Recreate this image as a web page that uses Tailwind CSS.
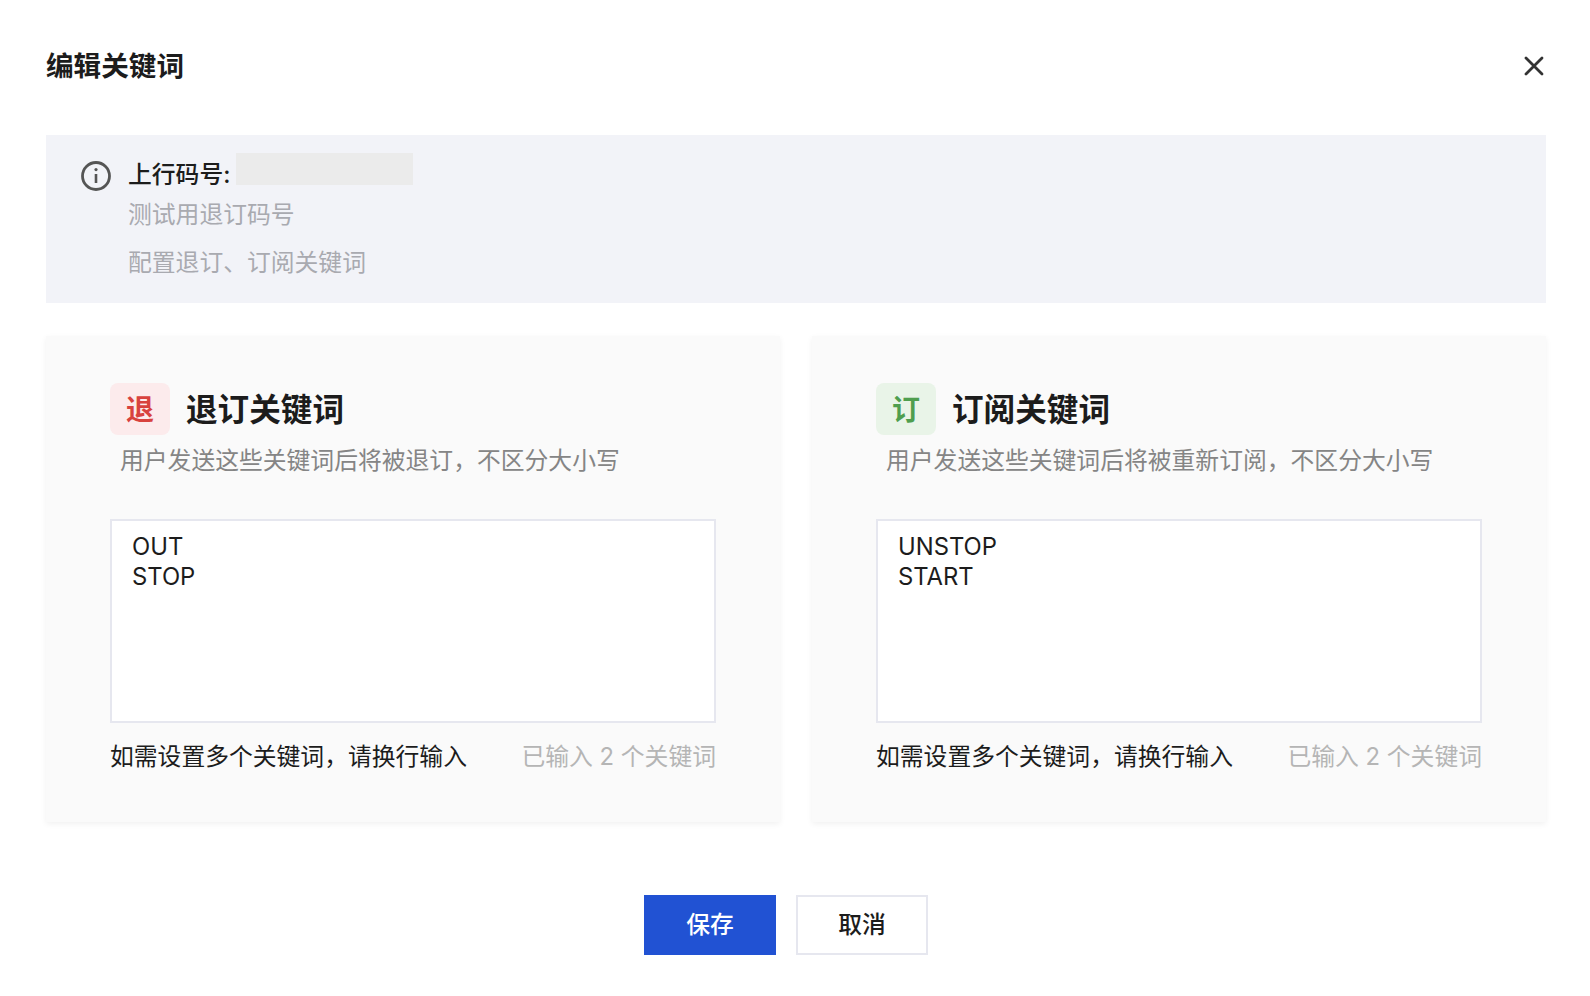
<!DOCTYPE html>
<html lang="zh-CN">
<head>
<meta charset="utf-8">
<title>编辑关键词</title>
<script src="https://cdn.jsdelivr.net/npm/@tailwindcss/browser@4"></script>
</head>
<body class="bg-white font-['Inter','Noto_Sans_CJK_SC',sans-serif] text-[#1c1c1c]">
<div class="w-[1590px] h-[996px] overflow-hidden pl-[46px] pr-[44px] pt-[46px]">
  <header class="flex items-center justify-between h-[38px] pr-[1px] pt-[1px]">
    <h1 class="text-[27.6px] leading-[38px] font-bold">编辑关键词</h1>
    <svg class="w-[22px] h-[22px] mt-[1px]" viewBox="0 0 22 22" fill="none" stroke="#333" stroke-width="2.8" stroke-linecap="round"><path d="M3 3L19 19M19 3L3 19"/></svg>
  </header>

  <section class="mt-[51px] h-[168px] bg-[#f2f3f8] flex pl-[35px] pt-[18px]">
    <svg class="w-[30px] h-[30px] mt-[8px] shrink-0" viewBox="0 0 30 30" fill="none" stroke="#555"><circle cx="15" cy="15" r="13.5" stroke-width="2.8"/><path d="M15 13V22" stroke-width="2.6"/><circle cx="15" cy="8.6" r="1.6" fill="#555" stroke="none"/></svg>
    <div class="ml-[17px] text-[23.8px]">
      <div class="flex items-start h-[44px]">
        <span class="leading-[44px] font-medium">上行码号:</span>
        <span class="ml-[6px] w-[177px] h-[32px] bg-[#ebebeb]"></span>
      </div>
      <p class="leading-[36px] text-[#a9aab0]">测试用退订码号</p>
      <p class="mt-[12px] leading-[36px] text-[#a9aab0]">配置退订、订阅关键词</p>
    </div>
  </section>

  <div class="mt-[33px] flex gap-[32px]">
    <section class="w-[734px] h-[486px] bg-[#fafafa] shadow-[0_2px_6px_rgba(0,0,0,0.06)] px-[64px] pt-[47px]">
      <div class="flex items-center gap-[16px]">
        <span class="w-[60px] h-[52px] rounded-[8px] bg-[#fcebec] text-[#d8423e] text-[28px] font-semibold flex items-center justify-center pt-[1px]">退</span>
        <h2 class="text-[31.6px] leading-[54px] h-[52px] font-bold">退订关键词</h2>
      </div>
      <p class="mt-[9px] pl-[10px] text-[23.8px] leading-[34px] h-[36px] text-[#858585]">用户发送这些关键词后将被退订，不区分大小写</p>
      <textarea readonly class="block mt-[39px] w-[606px] h-[204px] resize-none bg-white border-2 border-[#e6e7ef] px-[20px] pt-[11px] text-[23.8px] leading-[30px] outline-none">OUT
STOP</textarea>
      <div class="mt-[16px] flex justify-between text-[23.8px] leading-[36px]">
        <span>如需设置多个关键词，请换行输入</span>
        <span class="text-[#b5b5b5]">已输入 2 个关键词</span>
      </div>
    </section>
    <section class="w-[734px] h-[486px] bg-[#fafafa] shadow-[0_2px_6px_rgba(0,0,0,0.06)] px-[64px] pt-[47px]">
      <div class="flex items-center gap-[16px]">
        <span class="w-[60px] h-[52px] rounded-[8px] bg-[#e9f4e8] text-[#4f9e4f] text-[28px] font-semibold flex items-center justify-center pt-[1px]">订</span>
        <h2 class="text-[31.6px] leading-[54px] h-[52px] font-bold">订阅关键词</h2>
      </div>
      <p class="mt-[9px] pl-[10px] text-[23.8px] leading-[34px] h-[36px] text-[#858585]">用户发送这些关键词后将被重新订阅，不区分大小写</p>
      <textarea readonly class="block mt-[39px] w-[606px] h-[204px] resize-none bg-white border-2 border-[#e6e7ef] px-[20px] pt-[11px] text-[23.8px] leading-[30px] outline-none">UNSTOP
START</textarea>
      <div class="mt-[16px] flex justify-between text-[23.8px] leading-[36px]">
        <span>如需设置多个关键词，请换行输入</span>
        <span class="text-[#b5b5b5]">已输入 2 个关键词</span>
      </div>
    </section>
  </div>

  <div class="mt-[73px] flex gap-[20px] justify-center pr-[20px]">
    <button class="w-[132px] h-[60px] bg-[#2152d3] text-white text-[23.8px] font-medium">保存</button>
    <button class="w-[132px] h-[60px] bg-white border-2 border-[#e6e7ef] text-[23.8px] font-medium">取消</button>
  </div>
</div>
</body>
</html>
